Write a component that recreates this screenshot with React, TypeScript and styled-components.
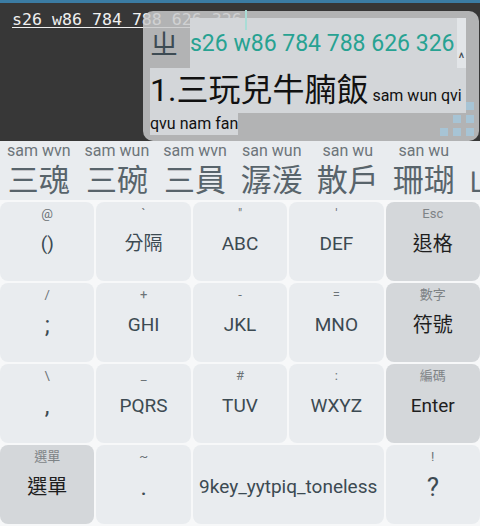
import * as React from 'react';
import styled, { createGlobalStyle } from 'styled-components';

const SANS = `Roboto, "Noto Sans CJK TC", sans-serif`;
const CJK = `"Noto Sans CJK TC", sans-serif`;

const GlobalStyle = createGlobalStyle`
  *, *::before, *::after {
    box-sizing: border-box;
  }
  html, body {
    margin: 0;
    padding: 0;
  }
  body {
    background: #f7f8f9;
    font-family: ${SANS};
  }
`;

type KeyDef = {
  hint?: string;
  label: string;
  fn?: boolean;
  span?: number;
  size?: number;
};

const rows: KeyDef[][] = [
  [
    { hint: '@', label: '()' },
    { hint: '`', label: '分隔' },
    { hint: '"', label: 'ABC' },
    { hint: "'", label: 'DEF' },
    { hint: 'Esc', label: '退格', fn: true, size: 20 },
  ],
  [
    { hint: '/', label: ';', size: 24 },
    { hint: '+', label: 'GHI' },
    { hint: '-', label: 'JKL' },
    { hint: '=', label: 'MNO' },
    { hint: '數字', label: '符號', fn: true, size: 20 },
  ],
  [
    { hint: '\\', label: ',', size: 24 },
    { hint: '_', label: 'PQRS' },
    { hint: '#', label: 'TUV' },
    { hint: ':', label: 'WXYZ' },
    { hint: '編碼', label: 'Enter', fn: true },
  ],
  [
    { hint: '選單', label: '選單', fn: true, size: 20 },
    { hint: '~', label: '.', size: 24 },
    { label: '9key_yytpiq_toneless', span: 2 },
    { hint: '!', label: '?', size: 26 },
  ],
];

const candidates = [
  { py: 'sam wvn', word: '三魂' },
  { py: 'sam wun', word: '三碗' },
  { py: 'sam wvn', word: '三員' },
  { py: 'san wun', word: '潺湲' },
  { py: 'san wu', word: '散戶' },
  { py: 'san wu', word: '珊瑚' },
  { py: 'san', word: '山溫' },
];

const Screen = styled.div`
  width: 480px;
  height: 526px;
  display: flex;
  flex-direction: column;
  overflow: hidden;
`;

// text field of the host app, with the composing popup over it
const Editor = styled.div`
  position: relative;
  height: 141px;
  flex: none;
  border-top: 3px solid #3b7ca4;
  background: #373737;
  padding: 7px 0 0 12px;
`;

const Composing = styled.span`
  font-family: 'DejaVu Sans Mono', monospace;
  font-size: 16.6px;
  line-height: 20px;
  color: #f0f0f0;
  text-decoration: underline;
  text-decoration-thickness: 1px;
  text-underline-offset: 2px;
  white-space: pre;
`;

const Caret = styled.span`
  position: relative;
  z-index: 3;
  display: inline-block;
  width: 2px;
  height: 20px;
  margin-left: 3px;
  vertical-align: -5px;
  background: #a9dcd6;
`;

const Popup = styled.div`
  position: absolute;
  left: 143px;
  top: 8px;
  width: 336px;
  height: 130px;
  border-radius: 10px;
  background: rgba(201, 202, 204, 0.84);
  padding: 7px 13px 0 7px;
  z-index: 2;
`;

const CodeRow = styled.div`
  display: flex;
  height: 50px;
`;

const Zhuyin = styled.div`
  width: 40px;
  display: flex;
  align-items: center;
  font-family: ${CJK};
  font-size: 28px;
  color: #3d4b53;
`;

const CodeText = styled.div`
  flex: 1;
  background: #d3d6d9;
  padding-top: 12px;
  font-family: Roboto, sans-serif;
  font-size: 23px;
  line-height: 28px;
  color: #27a292;
  white-space: nowrap;
`;

const MoreStrip = styled.div`
  width: 9px;
  background: #e2e5e8;
  padding-top: 33px;
  font-family: Roboto, sans-serif;
  font-size: 14px;
  line-height: 14px;
  color: #3f4a50;
  text-align: center;
`;

const PreviewLine = styled.div`
  display: flex;
  align-items: baseline;
  height: 45px;
  background: #d3d6d9;
  overflow: hidden;
  white-space: nowrap;
  color: #111;
`;

const PreviewWord = styled.span`
  font-size: 32px;
  line-height: 45px;
`;

const PreviewCode = styled.span`
  font-family: Roboto, sans-serif;
  font-size: 16px;
  line-height: 22px;
  color: #111;
  white-space: pre;
`;

const PreviewTail = styled.div`
  width: fit-content;
  height: 22px;
  background: #d3d6d9;
`;

const Corner = styled.svg`
  position: absolute;
  left: 297px;
  top: 91px;
`;

const CandidateBar = styled.div`
  height: 59px;
  flex: none;
  display: flex;
  background: #e9ecef;
  overflow: hidden;
  white-space: nowrap;
`;

const Candidate = styled.div`
  display: flex;
  flex-direction: column;
  align-items: center;
  flex: none;
  padding: 1px 7px 0;
`;

const Pinyin = styled.div`
  font-family: Roboto, sans-serif;
  font-size: 16px;
  line-height: 18px;
  color: #6d757a;
`;

const Word = styled.div`
  font-family: ${CJK};
  font-size: 31px;
  line-height: 36px;
  color: #58646b;
`;

const Keypad = styled.div`
  flex: 1;
  display: grid;
  grid-template-columns: repeat(5, 1fr);
  grid-template-rows: repeat(4, 79px);
  gap: 2px;
  padding: 2px 0;
  background: #f7f8f9;
`;

const Key = styled.div<{ fn?: boolean; span?: number }>`
  grid-column: span ${(p) => p.span || 1};
  display: grid;
  grid-template-rows: 22px 1fr 18px;
  justify-items: center;
  align-items: center;
  border-radius: 8px;
  background: ${(p) => (p.fn ? '#d4d7da' : '#e9ecef')};
`;

const Hint = styled.div<{ fn?: boolean }>`
  font-size: 13px;
  line-height: 16px;
  color: ${(p) => (p.fn ? '#7e8386' : '#6c7377')};
  padding-top: 2px;
`;

const Label = styled.div<{ fn?: boolean; size?: number }>`
  font-size: ${(p) => p.size || 19}px;
  line-height: 28px;
  color: ${(p) => (p.fn ? '#1e1e1e' : '#3c4a52')};
  white-space: nowrap;
`;

export default function App() {
  return (
    <Screen>
      <GlobalStyle />
      <Editor>
        <Composing>s26 w86 784 788 626 326</Composing>
        <Caret />
        <Popup>
          <CodeRow>
            <Zhuyin>ㄓ</Zhuyin>
            <CodeText>s26 w86 784 788 626 326</CodeText>
            <MoreStrip>^</MoreStrip>
          </CodeRow>
          <PreviewLine>
            <PreviewWord>1.三玩兒牛腩飯</PreviewWord>
            <PreviewCode> sam wun qvi</PreviewCode>
          </PreviewLine>
          <PreviewTail>
            <PreviewCode>qvu nam fan</PreviewCode>
          </PreviewTail>
          <Corner width="34" height="34" viewBox="0 0 34 34">
            <g fill="#a7c4d5">
              <rect x="26" y="0" width="8" height="8" />
              <rect x="13" y="13" width="8" height="8" />
              <rect x="26" y="13" width="8" height="8" />
              <rect x="0" y="26" width="8" height="8" />
              <rect x="13" y="26" width="8" height="8" />
              <rect x="26" y="26" width="8" height="8" />
            </g>
          </Corner>
        </Popup>
      </Editor>
      <CandidateBar>
        {candidates.map((c, i) => (
          <Candidate key={i}>
            <Pinyin>{c.py}</Pinyin>
            <Word>{c.word}</Word>
          </Candidate>
        ))}
      </CandidateBar>
      <Keypad>
        {rows.flat().map((k, i) => (
          <Key key={i} fn={k.fn} span={k.span}>
            <Hint fn={k.fn}>{k.hint}</Hint>
            <Label fn={k.fn} size={k.size}>
              {k.label}
            </Label>
          </Key>
        ))}
      </Keypad>
    </Screen>
  );
}
